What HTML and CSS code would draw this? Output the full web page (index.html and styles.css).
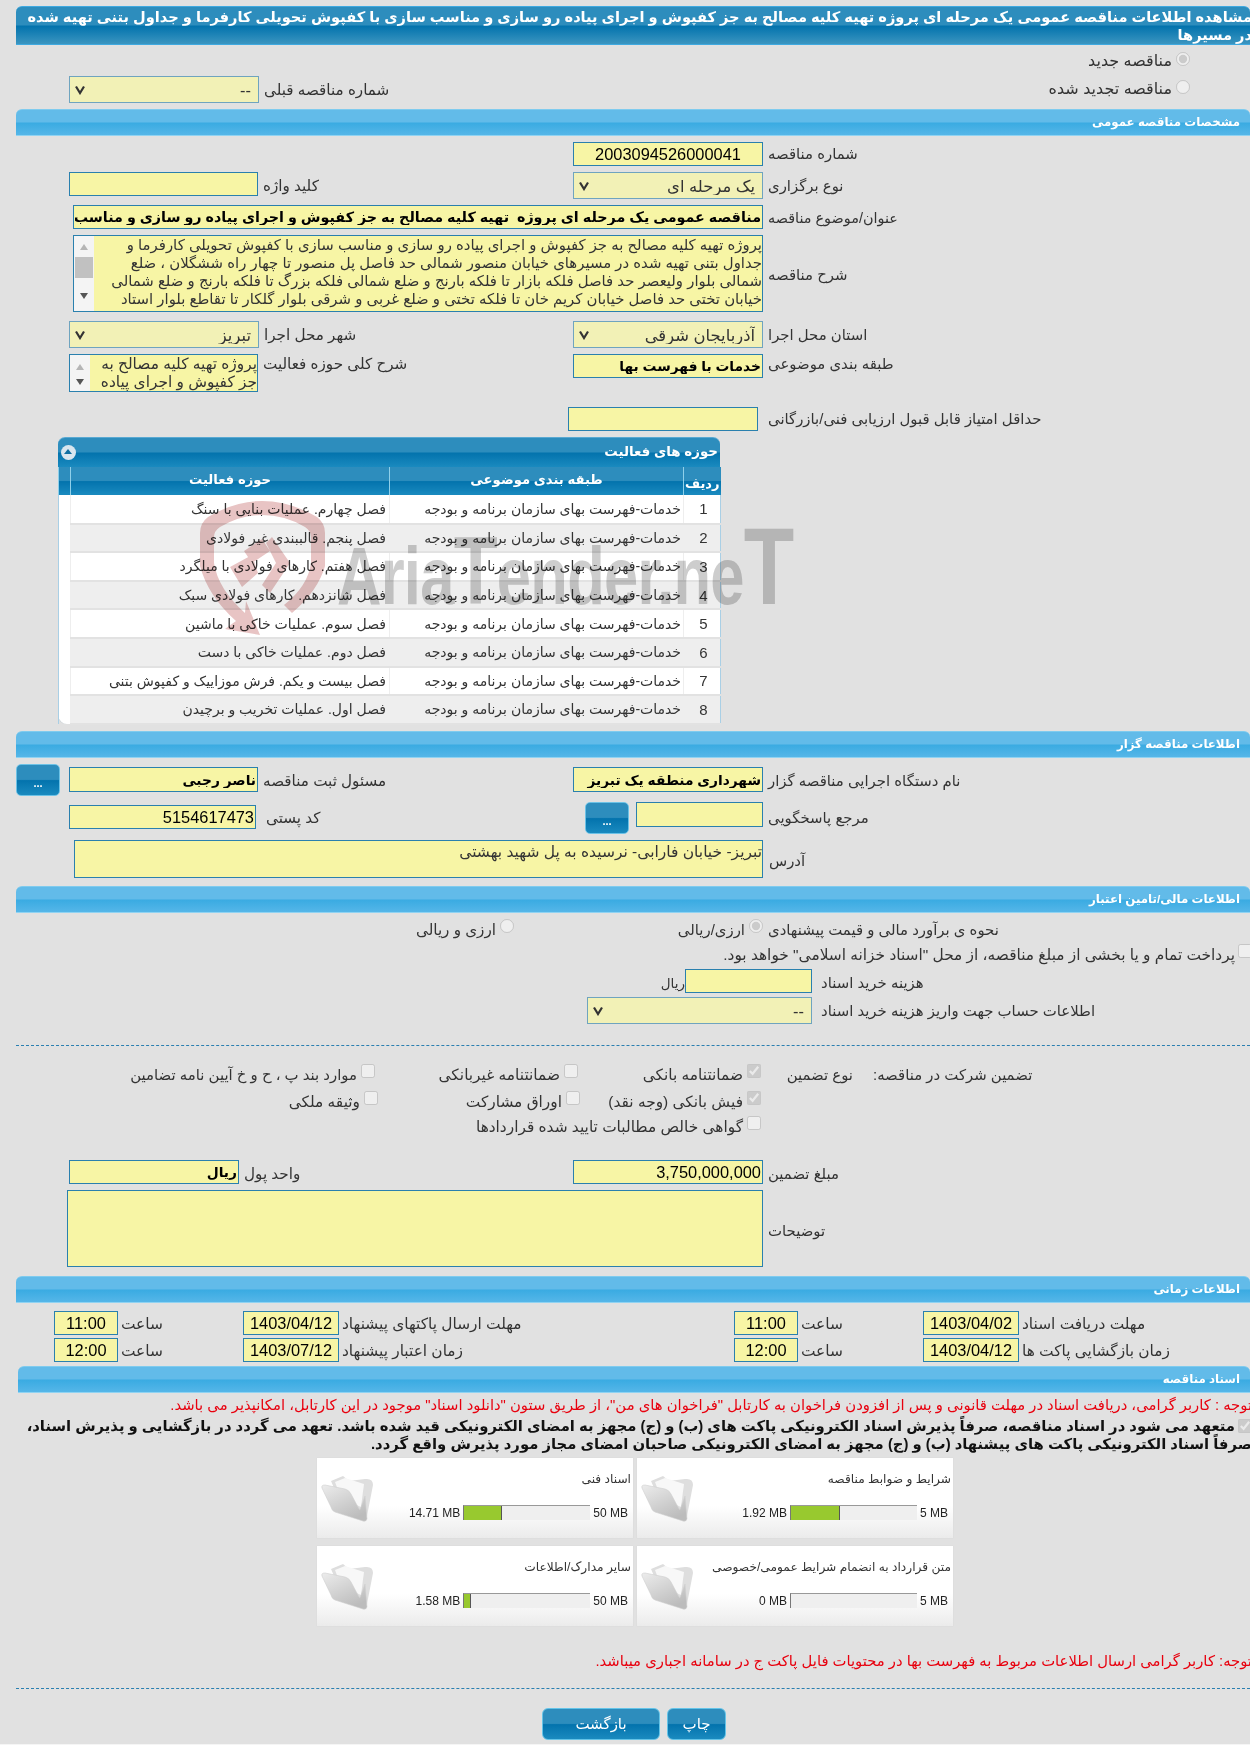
FILE: index.html
```html
<!DOCTYPE html>
<html lang="fa">
<head>
<meta charset="utf-8">
<title>مشاهده اطلاعات مناقصه</title>
<link rel="stylesheet" href="styles.css">
</head>
<body>
<div class="page">

<h1 class="pagetitle"><span>مشاهده اطلاعات مناقصه عمومی یک مرحله ای پروژه تهیه کلیه مصالح به جز کفپوش و اجرای پیاده رو سازی و مناسب سازی با کفپوش تحویلی کارفرما و جداول بتنی تهیه شده<br>در مسیرها</span></h1>

<div class="row h-radio1"><div class="cell"></div><div class="cell radiocell"><label class="lbl">مناقصه جدید</label><input type="radio" checked disabled class="rad"></div></div>
<div class="row h-radio2">
  <div class="cell"><select disabled class="sel w190"><option>--</option></select><span class="lbl">شماره مناقصه قبلی</span></div>
  <div class="cell radiocell"><label class="lbl">مناقصه تجدید شده</label><input type="radio" disabled class="rad"></div>
</div>

<div class="bar bar1">مشخصات مناقصه عمومی</div>

<div class="row h-num"><div class="cell"></div><div class="cell"><input class="inp w190 center" value="2003094526000041" disabled><span class="lbl">شماره مناقصه</span></div></div>
<div class="row h-type">
  <div class="cell"><input class="inp w189" disabled><span class="lbl">کلید واژه</span></div>
  <div class="cell"><select disabled class="sel w190"><option>یک مرحله ای</option></select><span class="lbl">نوع برگزاری</span></div>
</div>
<div class="full h-title"><input class="inp wtitle strong title-text" dir="rtl" value="مناقصه عمومی یک مرحله ای پروژه  تهیه کلیه مصالح به جز کفپوش و اجرای پیاده رو سازی و مناسب سازی با کفپوش تحویلی" disabled><span class="lbl tight">عنوان/موضوع مناقصه</span></div>
<div class="full h-desc"><div class="ta wtitle"><div class="sb"><i class="up"></i><b></b><i class="dn"></i></div><div class="tatext">پروژه  تهیه کلیه مصالح به جز کفپوش و اجرای پیاده رو سازی و مناسب سازی با کفپوش تحویلی کارفرما و<br>جداول بتنی تهیه شده در مسیرهای خیابان منصور شمالی حد فاصل پل منصور تا چهار راه ششگلان ، ضلع<br>شمالی بلوار ولیعصر حد فاصل فلکه بازار تا فلکه بارنج و ضلع شمالی فلکه بزرگ تا فلکه بارنج و ضلع شمالی<br>خیابان تختی حد فاصل خیابان کریم خان تا فلکه تختی و ضلع غربی و شرقی بلوار گلکار تا تقاطع بلوار استاد</div></div><span class="lbl mid">شرح مناقصه</span></div>
<div class="row h-prov">
  <div class="cell"><select disabled class="sel w190"><option>تبریز</option></select><span class="lbl">شهر محل اجرا</span></div>
  <div class="cell"><select disabled class="sel w190"><option>آذربایجان شرقی</option></select><span class="lbl">استان محل اجرا</span></div>
</div>
<div class="row h-class">
  <div class="cell"><div class="ta w189 small"><div class="sb"><i class="up"></i><i class="dn"></i></div><div class="tatext">پروژه  تهیه کلیه مصالح به<br>جز کفپوش و اجرای پیاده</div></div><span class="lbl">شرح کلی حوزه فعالیت</span></div>
  <div class="cell"><input class="inp w190 strong" dir="rtl" value="خدمات با فهرست بها" disabled><span class="lbl">طبقه بندی موضوعی</span></div>
</div>
<div class="full h-score"><input class="inp w190" disabled><span class="lbl">حداقل امتیاز قابل قبول ارزیابی فنی/بازرگانی</span></div>

<section class="panel">
  <div class="ptitle"><span class="collapse"></span><span>حوزه های فعالیت</span></div>
  <table class="grid">
    <thead><tr><th class="c0"></th><th class="c3">حوزه فعالیت</th><th class="c2">طبقه بندی موضوعی</th><th class="c1">ردیف</th></tr></thead>
    <tbody>
      <tr><td class="c0"></td><td class="c3">فصل چهارم. عملیات بنایی با سنگ</td><td class="c2">خدمات-فهرست بهای سازمان برنامه و بودجه</td><td class="c1">1</td></tr>
      <tr class="alt"><td class="c0"></td><td class="c3">فصل پنجم. قالببندی غیر فولادی</td><td class="c2">خدمات-فهرست بهای سازمان برنامه و بودجه</td><td class="c1">2</td></tr>
      <tr><td class="c0"></td><td class="c3">فصل هفتم. کارهای فولادی با میلگرد</td><td class="c2">خدمات-فهرست بهای سازمان برنامه و بودجه</td><td class="c1">3</td></tr>
      <tr class="alt"><td class="c0"></td><td class="c3">فصل شانزدهم. کارهای فولادی سبک</td><td class="c2">خدمات-فهرست بهای سازمان برنامه و بودجه</td><td class="c1">4</td></tr>
      <tr><td class="c0"></td><td class="c3">فصل سوم. عملیات خاکی با ماشین</td><td class="c2">خدمات-فهرست بهای سازمان برنامه و بودجه</td><td class="c1">5</td></tr>
      <tr class="alt"><td class="c0"></td><td class="c3">فصل دوم. عملیات خاکی با دست</td><td class="c2">خدمات-فهرست بهای سازمان برنامه و بودجه</td><td class="c1">6</td></tr>
      <tr><td class="c0"></td><td class="c3">فصل بیست و یکم. فرش موزاییک و کفپوش بتنی</td><td class="c2">خدمات-فهرست بهای سازمان برنامه و بودجه</td><td class="c1">7</td></tr>
      <tr class="alt"><td class="c0"></td><td class="c3">فصل اول. عملیات تخریب و برچیدن</td><td class="c2">خدمات-فهرست بهای سازمان برنامه و بودجه</td><td class="c1">8</td></tr>
    </tbody>
  </table>
  <div class="wm" aria-hidden="true">
    <svg class="wmlogo" viewBox="0 0 126 136" width="126" height="136"><path d="M0 32Q0 22 8 16Q35 0 62 0Q90 0 117 16Q125 22 125 32V65Q118 90 92 112L84 104Q108 85 111 62V36Q111 30 105 26Q85 14 62 14Q40 14 20 26Q14 30 14 36V62Q18 88 45 112L46 100L60 134L25 128L36 120Q8 95 0 65Z" fill="#e8c4c4"/><path d="M30 66 52 54 58 72 42 86ZM44 50 62 38 70 50 52 62ZM66 42 72 36 90 62 70 92 62 84 76 62Z" fill="#e8c4c4"/></svg>
    <span class="wmtext">Aria<i>T</i>ender.ne<i class="last">T</i></span>
  </div>
</section>

<div class="bar bar2">اطلاعات مناقصه گزار</div>

<div class="row h-agency">
  <div class="cell btncell"><button class="dots">...</button><input class="inp w189 strong" dir="rtl" value="ناصر رجبی" disabled><span class="lbl">مسئول ثبت مناقصه</span></div>
  <div class="cell"><input class="inp w190 strong" dir="rtl" value="شهرداری منطقه یک تبریز" disabled><span class="lbl">نام دستگاه اجرایی مناقصه گزار</span></div>
</div>
<div class="row h-ref">
  <div class="cell"><input class="inp w187 big" value="5154617473" disabled><span class="lbl lb2">کد پستی</span></div>
  <div class="cell refcell"><button class="dots dots2">...</button><input class="inp w127" disabled><span class="lbl">مرجع پاسخگویی</span></div>
</div>
<div class="full h-addr"><div class="ta waddr">تبریز- خیابان فارابی- نرسیده به پل شهید بهشتی</div><span class="lbl">آدرس</span></div>

<div class="bar bar3">اطلاعات مالی/تامین اعتبار</div>

<div class="row h-est">
  <div class="cell estleft"><label class="lbl">ارزی و ریالی</label><input type="radio" disabled class="rad"></div>
  <div class="cell"><span class="estopt"><label class="lbl">ارزی/ریالی</label><input type="radio" checked disabled class="rad"></span><span class="lbl">نحوه ی برآورد مالی و قیمت پیشنهادی</span></div>
</div>
<div class="payline"><span class="lbl">پرداخت تمام و یا بخشی از مبلغ مناقصه، از محل "اسناد خزانه اسلامی" خواهد بود.</span><input type="checkbox" disabled class="chk"></div>
<div class="full h-cost"><span class="lbl rial">ریال</span><input class="inp w127" disabled><span class="lbl l2">هزینه خرید اسناد</span></div>
<div class="full h-acct"><select disabled class="sel w225"><option>--</option></select><span class="lbl l2">اطلاعات حساب جهت واریز هزینه خرید اسناد</span></div>

<hr class="dash d1">

<div class="guar">
  <div class="grow grow1">
    <span class="gopt o1"><span class="lbl">موارد بند پ ، ح و خ آیین نامه تضامین</span><input type="checkbox" disabled class="chk"></span>
    <span class="gopt o2"><span class="lbl">ضمانتنامه غیربانکی</span><input type="checkbox" disabled class="chk"></span>
    <span class="gopt o3"><span class="lbl">ضمانتنامه بانکی</span><input type="checkbox" checked disabled class="chk"></span>
    <span class="lbl gtype">نوع تضمین</span>
    <span class="lbl ghead">تضمین شرکت در مناقصه:</span>
  </div>
  <div class="grow">
    <span class="gopt o1b"><span class="lbl">وثیقه ملکی</span><input type="checkbox" disabled class="chk"></span>
    <span class="gopt o2b"><span class="lbl">اوراق مشارکت</span><input type="checkbox" disabled class="chk"></span>
    <span class="gopt o3b"><span class="lbl">فیش بانکی (وجه نقد)</span><input type="checkbox" checked disabled class="chk"></span>
  </div>
  <div class="grow">
    <span class="gopt o3c"><span class="lbl">گواهی خالص مطالبات تایید شده قراردادها</span><input type="checkbox" disabled class="chk"></span>
  </div>
</div>

<div class="row h-amt">
  <div class="cell"><input class="inp w170 strong" dir="rtl" value="ریال" disabled><span class="lbl">واحد پول</span></div>
  <div class="cell"><input class="inp w190 big" value="3,750,000,000" disabled><span class="lbl">مبلغ تضمین</span></div>
</div>
<div class="full h-note"><div class="ta wnote"></div><span class="lbl">توضیحات</span></div>

<div class="bar bar4">اطلاعات زمانی</div>

<div class="times">
  <div class="tcell"><input class="inp tt" value="11:00" disabled><span class="lbl">ساعت</span></div>
  <div class="tcell"><input class="inp td" value="1403/04/12" disabled><span class="lbl">مهلت ارسال پاکتهای پیشنهاد</span></div>
  <div class="tcell"><input class="inp tt" value="11:00" disabled><span class="lbl">ساعت</span></div>
  <div class="tcell"><input class="inp td" value="1403/04/02" disabled><span class="lbl">مهلت دریافت اسناد</span></div>
  <div class="tcell"><input class="inp tt" value="12:00" disabled><span class="lbl">ساعت</span></div>
  <div class="tcell"><input class="inp td" value="1403/07/12" disabled><span class="lbl">زمان اعتبار پیشنهاد</span></div>
  <div class="tcell"><input class="inp tt" value="12:00" disabled><span class="lbl">ساعت</span></div>
  <div class="tcell"><input class="inp td" value="1403/04/12" disabled><span class="lbl">زمان بازگشایی پاکت ها</span></div>
</div>

<div class="bar bar5">اسناد مناقصه</div>

<p class="redline r-a">توجه : کاربر گرامی، دریافت اسناد در مهلت قانونی و پس از افزودن فراخوان به کارتابل "فراخوان های من"، از طریق ستون "دانلود اسناد" موجود در این کارتابل، امکانپذیر می باشد.</p>
<p class="pledge"><input type="checkbox" checked disabled class="chk">متعهد می شود در اسناد مناقصه، صرفاً پذیرش اسناد الکترونیکی پاکت های (ب) و (ج) مجهز به امضای الکترونیکی قید شده باشد. تعهد می گردد در بازگشایی و پذیرش اسناد،<br>صرفاً اسناد الکترونیکی پاکت های پیشنهاد (ب) و (ج) مجهز به امضای الکترونیکی صاحبان امضای مجاز مورد پذیرش واقع گردد.</p>

<div class="cards">
  <div class="card">
    <div class="ctitle">اسناد فنی</div>
    <svg class="fold" viewBox="0 0 52 46" width="52" height="46"><use href="#folder"/></svg>
    <div class="meter"><span>14.71 MB</span><div class="track"><div class="fill" style="width:30%"></div></div><span>50 MB</span></div>
  </div>
  <div class="card">
    <div class="ctitle">شرایط و ضوابط مناقصه</div>
    <svg class="fold" viewBox="0 0 52 46" width="52" height="46"><use href="#folder"/></svg>
    <div class="meter"><span>1.92 MB</span><div class="track"><div class="fill" style="width:39%"></div></div><span>5 MB</span></div>
  </div>
  <div class="card">
    <div class="ctitle">سایر مدارک/اطلاعات</div>
    <svg class="fold" viewBox="0 0 52 46" width="52" height="46"><use href="#folder"/></svg>
    <div class="meter"><span>1.58 MB</span><div class="track"><div class="fill" style="width:5%"></div></div><span>50 MB</span></div>
  </div>
  <div class="card">
    <div class="ctitle">متن قرارداد به انضمام شرایط عمومی/خصوصی</div>
    <svg class="fold" viewBox="0 0 52 46" width="52" height="46"><use href="#folder"/></svg>
    <div class="meter"><span>0 MB</span><div class="track"><div class="fill" style="width:0"></div></div><span>5 MB</span></div>
  </div>
</div>

<p class="redline r-b">توجه: کاربر گرامی ارسال اطلاعات مربوط به فهرست بها در محتویات فایل پاکت ج در سامانه اجباری میباشد.</p>

<hr class="dash d2">

<div class="actions"><button class="act back">بازگشت</button><button class="act print">چاپ</button></div>

<svg class="defs" width="0" height="0"><defs>
  <linearGradient id="fg" x1="0" y1="0" x2="0.6" y2="1"><stop offset="0" stop-color="#ececec"/><stop offset="1" stop-color="#bcbcbc"/></linearGradient>
  <symbol id="folder" viewBox="0 0 52 46">
    <path d="M10 5 22 0 28 5 44 3Q52 2 52 9L46 40 20 28Z" fill="#dedede"/>
    <path d="M14 6 24 2 43 8 40 31 20 22Z" fill="#f8f8f8"/>
    <path d="M1 12Q0 9 4 9L24 13Q28 14 30 18L38 33Q39 35 40 31L44 20 46 43Q45 46 42 45L14 36Q11 35 10 31Z" fill="url(#fg)" stroke="#cfcfcf" stroke-width=".6"/>
  </symbol>
</defs></svg>

</div>
</body>
</html>
```
FILE: styles.css
```css
* { box-sizing: border-box; }
html, body { margin: 0; padding: 0; background: #e1e1e1; overflow: hidden; width: 1250px; height: 1745px; }
body { font-family: "Liberation Sans", "DejaVu Sans", sans-serif; font-size: 14.8px; color: #333; }
.page { width: 1290px; padding: 6px 0 0 16px; position: relative; height: 1745px; }
.page::after { content: ""; position: absolute; left: 0; right: 0; bottom: 0; height: 1px; background: #f5f5f5; }

.pagetitle { margin: 0; height: 39px; width: 1234px; direction: rtl; color: #fff; font-size: 14.6px; font-weight: bold; line-height: 18px; padding: 1px 0 0 0; border-radius: 6px 6px 0 0; background: linear-gradient(#2d8dbd 0, #2d8dbd 48%, #0373ad 52%, #3b95c0 100%); border-top: 1px solid #3fa9e0; border-bottom: 1px solid #3fa9e0; }
.pagetitle span { display: block; margin-right: -2px; white-space: nowrap; }

.bar { height: 27px; width: 1234px; direction: rtl; color: #fff; font-size: 11.8px; font-weight: bold; padding: 2px 10px 0 0; line-height: 20px; border-radius: 6px 6px 0 0; background: linear-gradient(#62bbe9 0, #62bbe9 48%, #3aabe2 52%, #55b6e8 100%); border-top: 1px solid #7fcbee; border-bottom: 1px solid #90d3f2; }

.row { display: grid; grid-template-columns: 557px 700px; direction: ltr; }
.full { display: flex; align-items: flex-start; direction: ltr; }
.cell { display: flex; align-items: flex-start; min-width: 0; }
.cell:first-child { padding-left: 53px; }
.lbl { direction: rtl; white-space: nowrap; color: #333; font-size: 14.9px; line-height: 18px; padding-left: 5px; margin-top: 5px; }
.cell:first-child > .lbl { font-size: 15.2px; }
.tight { font-size: 14.4px; margin-top: 4px; }

.inp, .sel, .ta { border: 1px solid #2a80ae; background: #f7f5a5; color: #000; font-family: "Liberation Sans", "DejaVu Sans", sans-serif; }
.inp { height: 24px; padding: 0 1px; font-size: 16.4px; text-align: right; opacity: 1; flex: none; -webkit-text-fill-color: #000; }
.sel { height: 27px; appearance: none; -webkit-appearance: none; direction: rtl; background: #f2f1b6 url("data:image/svg+xml,%3Csvg xmlns='http://www.w3.org/2000/svg' width='12' height='10'%3E%3Cpath d='M2 1.5 6 8 10 1.5' fill='none' stroke='%23333' stroke-width='2.2'/%3E%3C/svg%3E") no-repeat 4px 8px; border-color: #6fa4bf; font-size: 16.4px; padding: 0 7px 0 20px; opacity: 1; color: #333; flex: none; }
.center { text-align: center; }
.strong { font-weight: bold; font-size: 13.8px; }
.title-text { font-size: 14.3px; }
.w189 { width: 189px; } .w190 { width: 190px; } .w187 { width: 187px; } .w127 { width: 127px; } .w170 { width: 170px; } .w225 { width: 225px; }
.wtitle { width: 690px; flex: none; }

.h-radio1 { margin-top: 6px; height: 25px; }
.h-radio2 { height: 33px; }
.radiocell { justify-content: flex-end; padding-right: 83px; }
.radiocell .lbl { font-size: 16px; padding-left: 0; }
.h-radio1 .lbl { margin-top: 1px; }
.h-radio2 .radiocell .lbl { margin-top: 4px; }
.rad { width: 14px; height: 14px; margin: 1px 0 0 4px; flex: none; }
.h-radio2 .rad { margin-top: 4px; }

.h-num { margin-top: 6px; height: 30px; }
.h-num .lbl { margin-top: 3px; }
.h-type { height: 33px; }
.h-title { height: 30px; padding-left: 57px; }
.h-desc { height: 86px; padding-left: 57px; }
.h-prov { height: 33px; }
.h-class { height: 53px; }
.h-class .lbl, .h-class .cell:first-child > .lbl { margin-top: 1px; }
.h-score { height: 30px; padding-left: 552px; }
.h-score .lbl { padding-left: 10px; margin-top: 3px; }

.ta { display: flex; direction: ltr; overflow: hidden; flex: none; }
.ta.wtitle { height: 77px; }
.ta.small { height: 38px; }
.tatext { flex: 1; direction: rtl; white-space: nowrap; font-size: 14.9px; line-height: 18px; color: #333; min-width: 0; overflow: hidden; }
.small .tatext { font-size: 15.4px; }
.sb { width: 20px; background: #f4f4f4; flex: none; display: flex; flex-direction: column; align-items: center; padding: 8px 0 6px; position: relative; }
.sb b { position: absolute; top: 21px; left: 1px; width: 18px; height: 21px; background: #c1c1c1; }
.sb i { width: 0; height: 0; border-left: 4px solid transparent; border-right: 4px solid transparent; }
.sb .up { border-bottom: 6px solid #b5b5b5; }
.sb .dn { border-top: 6px solid #555; margin-top: auto; margin-bottom: 6px; }
.small .sb { padding: 9px 0 0; }
.small .dn { margin-top: 9px; }
.mid { margin-top: 31px; }

.panel { position: relative; margin: 0 0 7px 42px; width: 662px; height: 287px; background: #fff; border-radius: 8px; border-bottom: 2px solid #cfd6da; }
.ptitle { height: 30px; display: flex; justify-content: space-between; direction: ltr; color: #fff; font-weight: bold; font-size: 13.4px; line-height: 28px; padding: 0 2px 0 3px; border-radius: 7px 7px 0 0; border-top: 1px solid #5aa9d2; background: linear-gradient(#2d8dbd 0, #2d8dbd 48%, #0373ad 52%, #1a8abf 100%); }
.ptitle span:last-child { direction: rtl; }
.collapse { width: 15px; height: 15px; margin-top: 7px; border-radius: 50%; background: #d8e6ef; position: relative; }
.collapse::after { content: ""; position: absolute; left: 3px; top: 4px; border-left: 4.5px solid transparent; border-right: 4.5px solid transparent; border-bottom: 5px solid #0f6fa3; }
.grid { border-collapse: collapse; table-layout: fixed; width: 662px; }
.grid th { height: 28px; padding: 0; color: #fff; font-size: 13.2px; font-weight: bold; border-left: 1px solid #8fd0ea; background: linear-gradient(#2d8dbd 0, #2d8dbd 48%, #0373ad 52%, #1a8abf 100%); }
.grid th.c3, .grid th.c2 { padding-bottom: 4px; }
.grid td { height: 28.6px; padding: 0 3px 0 0; direction: rtl; text-align: right; font-size: 14px; color: #333; border-left: 1px solid #eee; border-bottom: 2px solid #e2e2e2; white-space: nowrap; overflow: hidden; }
.grid tr.alt td { background: #eee; }
.grid td.c0 { background: #fff !important; border-left: 1px solid #a9cfe5; border-bottom: 0; }
.grid td.c1 { border-right: 1px solid #a9cfe5; }
.grid tr:last-child td.c0 { border-bottom-left-radius: 8px; }
.grid .c0 { width: 12px; } .grid .c3 { width: 319px; } .grid .c2 { width: 294px; } .grid .c1 { width: 37px; }
.grid td.c2 { padding-right: 2px; }
.grid td.c1 { text-align: center; padding: 0 0 0 3px; font-size: 15px; }
.grid th.c1 { direction: rtl; padding-top: 4px; font-size: 13px; }
.wm { position: absolute; left: 142px; top: 64px; display: flex; direction: ltr; pointer-events: none; mix-blend-mode: multiply; }
.wmlogo { flex: none; }
.wmtext { font-weight: bold; font-size: 82px; line-height: 1; color: #cdcdcd; margin-left: 11px; margin-top: 10px; height: 80px; width: 400px; transform: scaleX(.75); transform-origin: left top; letter-spacing: -1px; white-space: nowrap; }
.wmtext i { font-style: normal; font-size: 96px; }
.wmtext .last { font-size: 110px; }

.h-agency { height: 38px; margin-top: 6px; }
.btncell.cell { padding-left: 0; }
.btncell .inp { margin-left: 9px; }
.h-agency .inp { margin-top: 3px; height: 25px; }
.h-agency .lbl, .h-agency .cell:first-child > .lbl { margin-top: 8px; }
.dots { width: 44px; height: 32px; flex: none; border: 1px solid #6cc2e6; border-radius: 5px; color: #fff; font-weight: bold; font-size: 11px; padding: 6px 0 0; background: linear-gradient(#2d8dbd 0, #2d8dbd 48%, #0373ad 52%, #1a8abf 100%); font-family: "Liberation Sans", sans-serif; }
.dots2 { margin-right: 7px; }
.h-ref { height: 38px; }
.refcell { padding-left: 12px; }
.refcell .inp { height: 25px; }
.refcell .lbl { margin-top: 7px; }
.h-ref .cell:first-child .inp { margin-top: 3px; }
.h-ref .cell:first-child > .lb2 { padding-left: 10px; margin-top: 7px; }
.h-addr { height: 46px; padding-left: 58px; }
.waddr { width: 689px; height: 38px; display: block; direction: rtl; font-size: 15.5px; line-height: 18px; padding-top: 2px; color: #333; }
.h-addr .lbl { margin-top: 12px; padding-left: 6px; }

.h-est { height: 28px; margin-top: 5px; }
.h-est .lbl, .h-est .cell:first-child > .lbl { margin-top: 3px; }
.estleft.cell { padding-left: 0; justify-content: flex-end; padding-right: 59px; }
.estopt { display: flex; justify-content: flex-end; width: 190px; flex: none; }
.estopt .lbl { padding-left: 0; }
.payline { display: flex; justify-content: flex-end; direction: ltr; height: 24px; width: 1236px; margin-top: -3px; }
.payline .lbl { font-size: 15.4px; margin-top: 3px; padding-left: 0; }
.chk { width: 14px; height: 14px; margin: 1px 0 0 3px; flex: none; }
.h-cost { height: 28px; margin-top: 2px; padding-left: 646px; }
.h-acct { height: 27px; padding-left: 571px; }
.rial { padding-left: 0; margin-top: 6px; width: 23px; font-size: 13.5px; }
.l2 { padding-left: 9px; margin-top: 5px; }
.dash { border: 0; border-top: 1px dashed #2a7fb0; margin: 0; width: 1234px; }
.d1 { margin-top: 21px; }
.guar { margin-top: 17px; height: 92px; }
.grow { direction: ltr; display: flex; height: 25px; align-items: flex-start; }
.grow1 { height: 27px; }
.gopt { display: flex; flex: none; justify-content: flex-end; }
.gopt .lbl { padding-left: 0; font-size: 15.4px; margin-top: 3px; }
.o1 .lbl { font-size: 14.9px; }
.gopt .chk { margin: 1px 0 0 4px; }
.o1 { width: 359px; } .o2 { width: 203px; } .o3 { width: 183px; }
.o1b { width: 362px; } .o2b { width: 202px; } .o3b { width: 181px; }
.o3c { width: 745px; }
.gtype { margin-left: 26px; width: 66px; padding-left: 0; margin-top: 3px; }
.ghead { margin-left: 20px; padding-left: 0; margin-top: 3px; }
.h-amt { height: 30px; margin-top: 5px; }
.h-note { height: 86px; padding-left: 51px; }
.wnote { width: 696px; height: 77px; }
.h-note .lbl { margin-top: 32px; }

.times { display: grid; grid-template-columns: 189px 491px 189px 300px; margin: 8px 0 0 38px; row-gap: 3px; direction: ltr; }
.tcell { display: flex; align-items: flex-start; height: 24px; }
.tcell .lbl { padding-left: 3px; font-size: 15.4px; margin-top: 4px; }
.tt { width: 64px; text-align: center; }
.td { width: 96px; text-align: center; }
.bar5 { margin: 4px 0 0 2px; width: 1232px; }
.redline { margin: 0; direction: rtl; color: #e8000e; white-space: nowrap; font-size: 14.8px; line-height: 18px; width: 1236px; }
.r-a { margin-top: 3px; }
.pledge { width: 1236px; direction: rtl; white-space: nowrap; margin: 3px 0 0; height: 35px; font-weight: bold; font-size: 14.8px; line-height: 18px; color: #111; }
.pledge .chk { margin: 0 0 0 3px; vertical-align: -2px; }
.cards { margin: 6px 0 0 301px; width: 640px; display: grid; grid-template-columns: 316px 316px; column-gap: 4px; row-gap: 8px; }
.card { height: 80px; position: relative; background: linear-gradient(#fff 0, #fff 60%, #ebebeb 100%); box-shadow: 0 0 1px #ccc; padding-top: 13px; direction: rtl; }
.ctitle { font-size: 12.2px; line-height: 16px; padding-right: 2px; color: #333; white-space: nowrap; }
.fold { position: absolute; left: 4px; top: 18px; }
.meter { position: absolute; right: 5px; top: 47px; display: flex; direction: ltr; font-size: 12px; line-height: 16px; color: #222; gap: 3px; white-space: nowrap; }
.track { width: 127px; height: 15px; background: #efefef; border-top: 1px solid #999; border-left: 1px solid #777; flex: none; }
.fill { background: #98c92f; height: 100%; border-right: 1px solid #555; }
.fill[style="width:0"] { border: 0; }
.r-b { margin-top: 26px; }
.d2 { margin-top: 18px; }
.actions { display: flex; gap: 7px; margin: 19px 0 0 526px; direction: ltr; }
.act { height: 32px; border: 1px solid #64c4e8; border-radius: 6px; color: #fff; font-family: "Liberation Sans", "DejaVu Sans", sans-serif; font-size: 15px; background: linear-gradient(#2d8dbd 0, #2d8dbd 48%, #0373ad 52%, #1a8abf 100%); flex: none; direction: rtl; }
.back { width: 118px; } .print { width: 59px; }
.defs { position: absolute; }
```
